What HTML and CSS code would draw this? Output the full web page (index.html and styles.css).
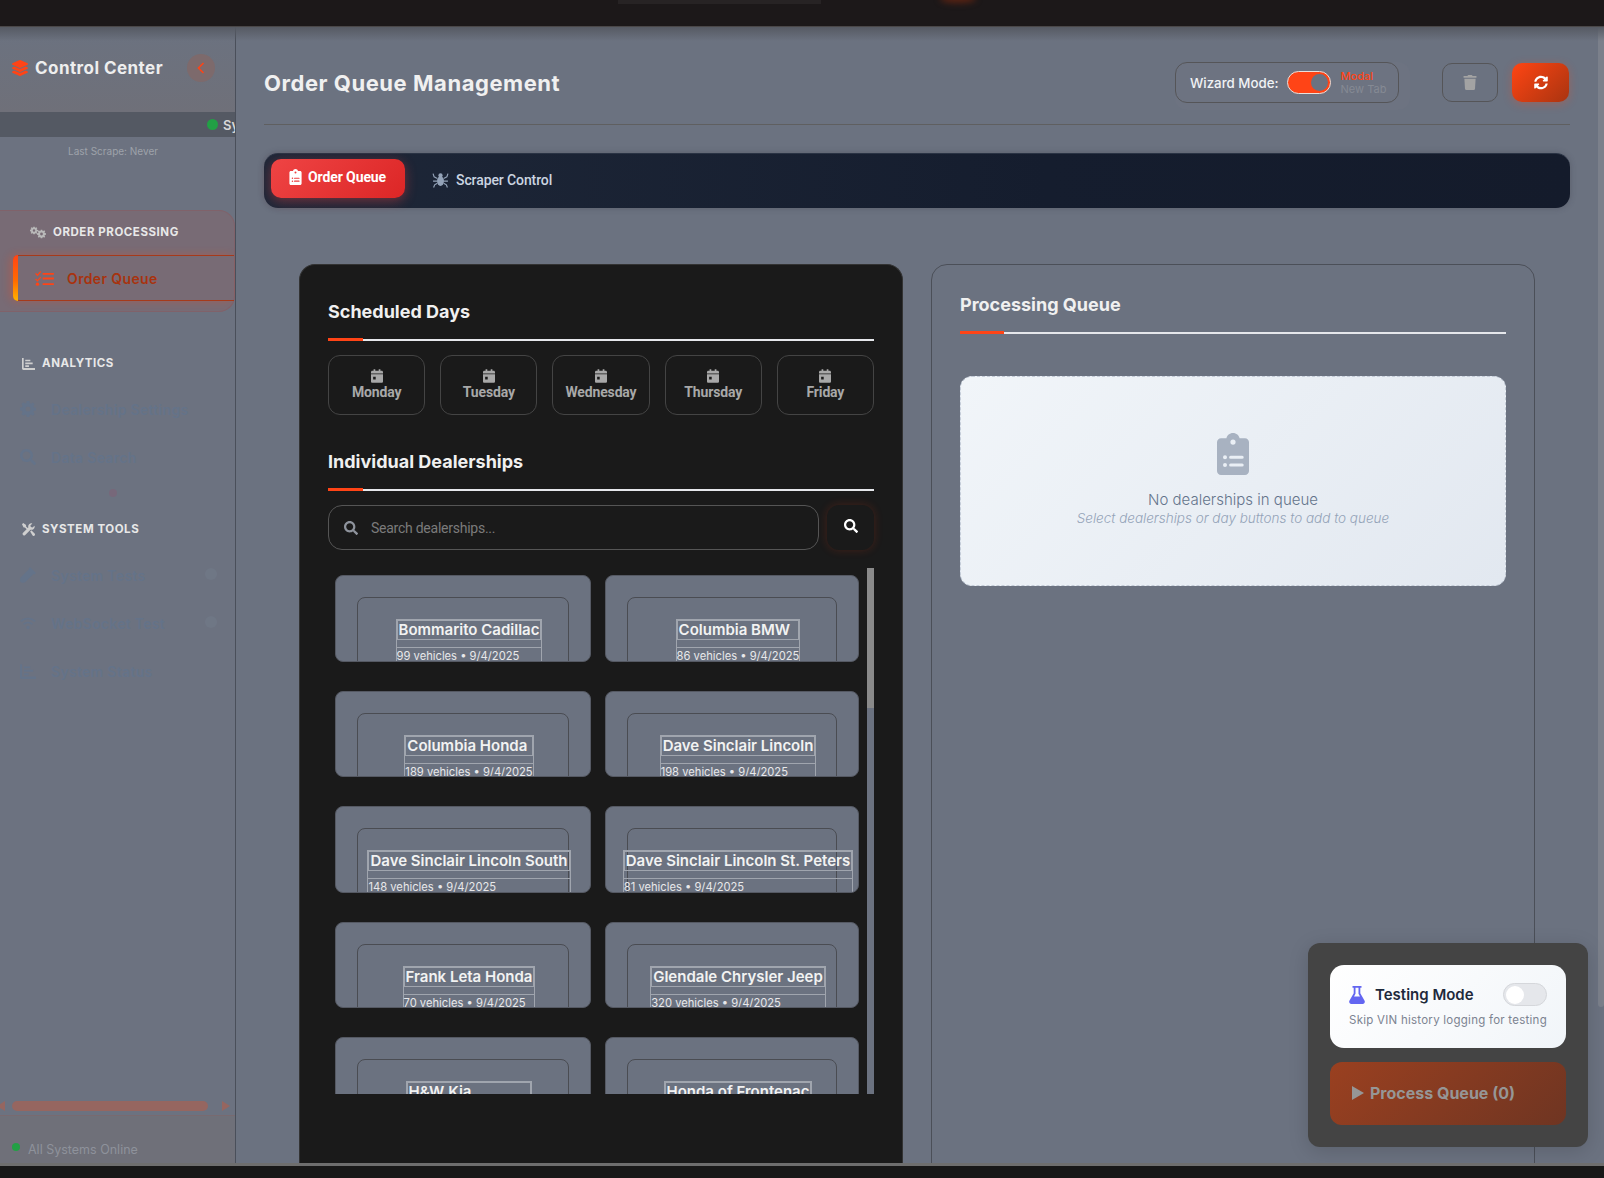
FILE: index.html
```html
<!DOCTYPE html>
<html>
<head>
    <meta charset="UTF-8">
    <title>Control Center: Order Queue Management</title>
    <link rel="stylesheet" href="styles.css">
</head>
<body>
    <!-- icon sprite -->
    <svg class="sprite" xmlns="http://www.w3.org/2000/svg">
        <symbol id="i-layers" viewBox="0 0 512 512"><path d="M12.41 148.02l232.94 105.67c6.8 3.09 14.49 3.09 21.29 0l232.94-105.67c16.55-7.51 16.55-32.52 0-40.03L266.65 2.31a25.607 25.607 0 0 0-21.29 0L12.41 107.98c-16.55 7.51-16.55 32.53 0 40.04zm487.18 88.28l-58.09-26.33-161.64 73.27c-7.56 3.43-15.59 5.17-23.86 5.17s-16.29-1.74-23.86-5.17L70.51 209.97l-58.1 26.33c-16.55 7.5-16.55 32.5 0 40l232.94 105.59c6.8 3.08 14.49 3.08 21.29 0L499.59 276.3c16.55-7.5 16.55-32.5 0-40zm0 127.8l-57.87-26.23-161.86 73.37c-7.56 3.43-15.59 5.17-23.86 5.17s-16.29-1.74-23.86-5.17L70.29 337.87 12.41 364.1c-16.55 7.5-16.55 32.5 0 40l232.94 105.59c6.8 3.08 14.49 3.08 21.29 0L499.59 404.1c16.55-7.5 16.55-32.5 0-40z"/></symbol>
        <symbol id="i-clipboard" viewBox="0 0 32 42"><path fill-rule="evenodd" d="M16 0c3.4 0 6 2.3 6.6 5.3H28c2.2 0 4 1.8 4 4V38c0 2.2-1.800 4-4 4H4c-2.200 0-4-1.800-4-4V9.300c0-2.200 1.800-4 4-4h5.400C10 2.300 12.600 0 16 0zm0 6.500a2.600 2.600 0 1 0 0 5.200 2.600 2.600 0 0 0 0-5.200zM8 22.300a2 2 0 1 0 0 4 2 2 0 0 0 0-4zm5.600.5a1.500 1.500 0 0 0 0 3h11.600a1.500 1.500 0 0 0 0-3zM8 30a2 2 0 1 0 0 4 2 2 0 0 0 0-4zm5.600.5a1.500 1.500 0 0 0 0 3h11.600a1.500 1.500 0 0 0 0-3z"/></symbol>
        <symbol id="i-calendar" viewBox="0 0 14 16"><path fill-rule="evenodd" d="M3 0h2v2h4V0h2v2h1.500C13.300 2 14 2.700 14 3.500V5H0V3.500C0 2.700 .7 2 1.500 2H3zM0 6h14v8.500c0 .8-.7 1.500-1.500 1.500h-11C.7 16 0 15.300 0 14.500zm2.500 3v3h3V9z"/></symbol>
        <symbol id="i-search" viewBox="0 0 512 512"><path d="M505 442.7L405.3 343c-4.5-4.5-10.6-7-17-7H372c27.6-35.3 44-79.7 44-128C416 93.1 322.9 0 208 0S0 93.1 0 208s93.1 208 208 208c48.3 0 92.7-16.4 128-44v16.3c0 6.4 2.5 12.5 7 17l99.7 99.7c9.4 9.4 24.6 9.4 33.9 0l28.3-28.3c9.4-9.4 9.4-24.6.1-34zM208 336c-70.7 0-128-57.2-128-128 0-70.7 57.2-128 128-128 70.7 0 128 57.2 128 128 0 70.7-57.2 128-128 128z"/></symbol>
        <symbol id="i-trash" viewBox="0 0 448 512"><path d="M432 32H312l-9.4-18.7A24 24 0 0 0 281.1 0H166.8a23.72 23.72 0 0 0-21.4 13.3L136 32H16A16 16 0 0 0 0 48v32a16 16 0 0 0 16 16h416a16 16 0 0 0 16-16V48a16 16 0 0 0-16-16zM53.2 467a48 48 0 0 0 47.9 45h245.8a48 48 0 0 0 47.9-45L416 128H32z"/></symbol>
        <symbol id="i-sync" viewBox="0 0 512 512"><path d="M370.72 133.28C339.458 104.008 298.888 87.962 255.848 88c-77.458.068-144.328 53.178-162.791 126.85-1.344 5.363-6.122 9.15-11.651 9.15H24.103c-7.498 0-13.194-6.807-11.807-14.176C33.933 94.924 134.813 8 256 8c66.448 0 126.791 26.136 171.315 68.685L463.03 40.97C478.149 25.851 504 36.559 504 57.941V192c0 13.255-10.745 24-24 24H345.941c-21.382 0-32.09-25.851-16.971-40.971l41.75-41.749zM32 296h134.059c21.382 0 32.09 25.851 16.971 40.971l-41.75 41.75c31.262 29.273 71.835 45.319 114.876 45.28 77.418-.07 144.315-53.144 162.787-126.849 1.344-5.363 6.122-9.15 11.651-9.15h57.304c7.498 0 13.194 6.807 11.807 14.176C478.067 417.076 377.187 504 256 504c-66.448 0-126.791-26.136-171.315-68.685L48.97 471.03C33.851 486.149 8 475.441 8 454.059V320c0-13.255 10.745-24 24-24z"/></symbol>
        <symbol id="i-spider" viewBox="0 0 16 16"><ellipse cx="8" cy="9.500" rx="3.300" ry="4.500"/><circle cx="8" cy="4.200" r="2"/><path d="M5 7L2 5.500 1 2.500M11 7l3-1.500 1-3M4.800 9.500H1M11.200 9.500H15M5 11.500l-2.500 1.500-1 2.500M11 11.500l2.500 1.500 1 2.500" fill="none" stroke="currentColor" stroke-width="1.100"/></symbol>
        <symbol id="i-gear" viewBox="0 0 16 16"><path fill-rule="evenodd" d="M6.700 0h2.600l.4 2.100 1.300.6 1.800-1.200 1.800 1.800-1.200 1.800.6 1.300 2 .4v2.600l-2 .4-.6 1.300 1.200 1.800-1.800 1.800-1.800-1.200-1.300.6-.4 2H6.700l-.4-2-1.300-.6-1.800 1.200-1.800-1.800 1.200-1.800-.6-1.300-2-.4V6.600l2-.4.6-1.300L1.400 3.100l1.800-1.800L5 2.500l1.300-.5zM8 5.500a2.500 2.500 0 1 0 0 5 2.500 2.500 0 0 0 0-5z"/></symbol>
        <symbol id="i-cogs" viewBox="0 0 16 12"><use href="#i-gear" x="0" y="0" width="8" height="8"/><use href="#i-gear" x="7" y="3" width="9" height="9"/></symbol>
        <symbol id="i-chart" viewBox="0 0 14 14"><path d="M0 1h1.800v10.800H14V14H1.500C.6 14 0 13.400 0 12.500zM3.500 3h5.500v1.700H3.500zM3.500 6h8v1.700h-8zM3.500 9h4v1.700h-4z"/></symbol>
        <symbol id="i-tools" viewBox="0 0 16 16"><path d="M1.500 0L5 2.500v1.700l3 3-1.400 1.400-3-3H2L0 1.500zM15.500 3.500a4 4 0 0 1-5 4.700L4 14.700a1.800 1.800 0 0 1-2.700-2.600l6.500-6.500a4 4 0 0 1 5-5L10.300 3l.6 2 2 .6zM10 10.500l1.500-1.500 4 4c.7.7.7 1.800 0 2.500s-1.800.7-2.500 0z"/></symbol>
        <symbol id="i-listcheck" viewBox="0 0 20 16"><path d="M8 2h12v2H8zM8 7h12v2H8zM8 13h12v2H8z"/><path d="M1 2l1.500 1.500L5.500 0l1 1L2.500 5.500 0 3zM1 8l1.500 1.500L5.500 6l1 1-4 4.500L0 9z"/><circle cx="2.500" cy="14" r="1.800"/></symbol>
        <symbol id="i-flask" viewBox="0 0 16 18"><path fill-rule="evenodd" d="M3.500 0h9v1.800H11.300v5.400l4.300 7.600c.7 1.400-.2 3.200-1.900 3.200H2.300c-1.700 0-2.600-1.800-1.900-3.200l4.300-7.600V1.800H3.500zM6.500 1.800v5.900L5 10.500h6L9.500 7.700V1.800z"/></symbol>
        <symbol id="i-wifi" viewBox="0 0 20 16"><path d="M1 6a13 13 0 0 1 18 0M4.500 9.500a8 8 0 0 1 11 0" fill="none" stroke="currentColor" stroke-width="2"/><circle cx="10" cy="13.500" r="2"/></symbol>
        <symbol id="i-vial" viewBox="0 0 16 16"><path d="M10 0l6 6-1.500 1.500-.8-.8L6 14.500c-1.700 1.700-4 1.700-5.200.5s-1.200-3.500.5-5.200l7.800-7.800-.6-.5z"/></symbol>
    </svg>

    <div class="top-bar"><span class="top-tab"></span><span class="top-glow"></span></div>

    <div class="app">
        <aside class="sidebar">
            <div class="side-head">
                <svg class="logo-icon"><use href="#i-layers"/></svg>
                <span class="logo-text">Control Center</span>
                <button class="collapse-btn"><svg viewBox="0 0 8 12" width="8" height="12"><path d="M6.500 1L1.500 6l5 5" fill="none" stroke="#ff4416" stroke-width="1.600"/></svg></button>
            </div>
            <div class="status-strip"><span class="dot"></span><span class="status-text">System Online</span></div>
            <div class="last-scrape">Last Scrape: Never</div>

            <div class="nav-group active-group">
                <div class="group-label"><svg class="group-icon"><use href="#i-cogs"/></svg>Order Processing</div>
                <a class="nav-item active"><svg class="nav-icon"><use href="#i-listcheck"/></svg>Order Queue</a>
            </div>

            <div class="nav-group analytics">
                <div class="group-label"><svg class="group-icon"><use href="#i-chart"/></svg>Analytics</div>
                <div class="ghost-list">
                    <a class="nav-item ghost"><svg class="nav-icon"><use href="#i-gear"/></svg>Dealership Settings</a>
                    <a class="nav-item ghost"><svg class="nav-icon"><use href="#i-search"/></svg>Data Search</a>
                </div>
            </div>
            <span class="ghost-dot"></span>

            <div class="nav-group tools">
                <div class="group-label"><svg class="group-icon"><use href="#i-tools"/></svg>System Tools</div>
                <div class="ghost-list">
                    <a class="nav-item ghost"><svg class="nav-icon"><use href="#i-vial"/></svg>System Tests<span class="ghost-badge"></span></a>
                    <a class="nav-item ghost"><svg class="nav-icon"><use href="#i-wifi"/></svg>WebSocket Test<span class="ghost-badge"></span></a>
                    <a class="nav-item ghost"><svg class="nav-icon"><use href="#i-chart"/></svg>System Status</a>
                </div>
            </div>

            <div class="side-spacer"></div>
            <div class="side-scroll">
                <span class="arrow-left"></span>
                <span class="side-thumb"></span>
                <span class="arrow-right"></span>
            </div>
            <div class="side-foot"><span class="foot-dot"></span>All Systems Online</div>
        </aside>

        <main class="main">
            <header class="page-head">
                <h1>Order Queue Management</h1>
                <div class="head-controls">
                    <div class="wizard-wrap">
                        <div class="wizard">
                            <span class="wizard-label">Wizard Mode:</span>
                            <span class="wizard-toggle"><span class="wizard-knob"></span></span>
                            <span class="wizard-opts"><span class="opt-on">Modal</span><span class="opt-off">New Tab</span></span>
                        </div>
                    </div>
                    <button class="btn-clear"><svg class="btn-icon"><use href="#i-trash"/></svg></button>
                    <button class="btn-refresh"><svg class="btn-icon"><use href="#i-sync"/></svg></button>
                </div>
            </header>

            <nav class="tabs">
                <a class="tab tab-active"><svg class="tab-icon-a"><use href="#i-clipboard"/></svg>Order Queue</a>
                <a class="tab"><svg class="tab-icon"><use href="#i-spider"/></svg>Scraper Control</a>
            </nav>

            <div class="columns">
                <section class="card-left">
                    <h2 class="section-title">Scheduled Days</h2>
                    <div class="day-row">
                        <button class="day"><svg class="day-icon"><use href="#i-calendar"/></svg>Monday</button>
                        <button class="day"><svg class="day-icon"><use href="#i-calendar"/></svg>Tuesday</button>
                        <button class="day"><svg class="day-icon"><use href="#i-calendar"/></svg>Wednesday</button>
                        <button class="day"><svg class="day-icon"><use href="#i-calendar"/></svg>Thursday</button>
                        <button class="day"><svg class="day-icon"><use href="#i-calendar"/></svg>Friday</button>
                    </div>

                    <h2 class="section-title second">Individual Dealerships</h2>
                    <div class="search-row">
                        <div class="search-box"><svg class="search-icon"><use href="#i-search"/></svg><span class="placeholder">Search dealerships...</span></div>
                        <button class="search-btn"><svg class="search-btn-icon"><use href="#i-search"/></svg></button>
                    </div>

                    <div class="dealer-area">
                        <div class="dealer-grid">
                            <div class="dealer"><div class="dealer-inner"><div class="dealer-info"><div class="dealer-name">Bommarito Cadillac</div><div class="dealer-gap"></div><div class="dealer-sub">99 vehicles • 9/4/2025</div></div></div></div>
                            <div class="dealer"><div class="dealer-inner"><div class="dealer-info"><div class="dealer-name">Columbia BMW</div><div class="dealer-gap"></div><div class="dealer-sub">86 vehicles • 9/4/2025</div></div></div></div>
                            <div class="dealer"><div class="dealer-inner"><div class="dealer-info"><div class="dealer-name">Columbia Honda</div><div class="dealer-gap"></div><div class="dealer-sub">189 vehicles • 9/4/2025</div></div></div></div>
                            <div class="dealer"><div class="dealer-inner"><div class="dealer-info"><div class="dealer-name">Dave Sinclair Lincoln</div><div class="dealer-gap"></div><div class="dealer-sub">198 vehicles • 9/4/2025</div></div></div></div>
                            <div class="dealer"><div class="dealer-inner"><div class="dealer-info"><div class="dealer-name">Dave Sinclair Lincoln South</div><div class="dealer-gap"></div><div class="dealer-sub">148 vehicles • 9/4/2025</div></div></div></div>
                            <div class="dealer"><div class="dealer-inner"><div class="dealer-info"><div class="dealer-name">Dave Sinclair Lincoln St. Peters</div><div class="dealer-gap"></div><div class="dealer-sub">81 vehicles • 9/4/2025</div></div></div></div>
                            <div class="dealer"><div class="dealer-inner"><div class="dealer-info"><div class="dealer-name">Frank Leta Honda</div><div class="dealer-gap"></div><div class="dealer-sub">70 vehicles • 9/4/2025</div></div></div></div>
                            <div class="dealer"><div class="dealer-inner"><div class="dealer-info"><div class="dealer-name">Glendale Chrysler Jeep</div><div class="dealer-gap"></div><div class="dealer-sub">320 vehicles • 9/4/2025</div></div></div></div>
                            <div class="dealer"><div class="dealer-inner"><div class="dealer-info"><div class="dealer-name">H&amp;W Kia</div><div class="dealer-gap"></div><div class="dealer-sub">112 vehicles • 9/4/2025</div></div></div></div>
                            <div class="dealer"><div class="dealer-inner"><div class="dealer-info"><div class="dealer-name">Honda of Frontenac</div><div class="dealer-gap"></div><div class="dealer-sub">95 vehicles • 9/4/2025</div></div></div></div>
                        </div>
                        <div class="list-scroll"><span class="list-thumb"></span></div>
                    </div>
                </section>

                <section class="card-right">
                    <h2 class="section-title">Processing Queue</h2>
                    <div class="empty-box">
                        <svg class="empty-icon"><use href="#i-clipboard"/></svg>
                        <div class="empty-main">No dealerships in queue</div>
                        <div class="empty-sub">Select dealerships or day buttons to add to queue</div>
                    </div>
                </section>
            </div>
        </main>
        <div class="page-scroll"><span class="page-thumb"></span></div>

        <!-- floating actions -->
        <div class="float-panel">
            <div class="testing-card">
                <div class="testing-top">
                    <svg class="flask"><use href="#i-flask"/></svg>
                    <span class="testing-title">Testing Mode</span>
                    <span class="testing-toggle"><span class="testing-knob"></span></span>
                </div>
                <div class="testing-sub">Skip VIN history logging for testing</div>
            </div>
            <button class="process-btn"><svg viewBox="0 0 12 14" width="12" height="14"><path d="M0 0l12 7-12 7z" fill="#969696"/></svg>Process Queue (0)</button>
        </div>
    </div>

    <div class="bottom-bar"></div>
</body>
</html>
```

FILE: styles.css
```css
html, body {
    margin: 0;
    height: 100%;
}

body {
    width: 1604px;
    height: 1178px;
    overflow: hidden;
    display: flex;
    flex-direction: column;
    background-color: #181818;
    font-family: Inter, "Open Sans", sans-serif;
    color: #f0f0f0;
}

.sprite {
    width: 0;
    height: 0;
    position: absolute;
}

svg {
    fill: currentColor;
    flex-shrink: 0;
}

button {
    font-family: inherit;
    padding: 0;
}

/* window edges */
.top-bar {
    height: 26px;
    flex-shrink: 0;
    background-color: #1c1819;
    border-bottom: 1px solid #4a4748;
    position: relative;
}

.top-tab {
    position: absolute;
    left: 618px;
    top: 0;
    width: 203px;
    height: 4px;
    background-color: #272324;
}

.top-glow {
    position: absolute;
    left: 940px;
    top: -6px;
    width: 36px;
    height: 9px;
    border-radius: 50%;
    background-color: #5a2313;
    filter: blur(3px);
}

.bottom-bar {
    height: 12px;
    flex-shrink: 0;
    background-color: #181818;
    border-top: 3px solid #6e6e6e;
}

.app {
    flex: 1;
    min-height: 0;
    display: flex;
    position: relative;
    background-color: #6b7280;
    overflow: hidden;
}

.app::before {
    content: "";
    position: absolute;
    left: 0;
    right: 0;
    top: 0;
    height: 14px;
    background: linear-gradient(#565a63, rgba(107, 114, 128, 0));
    z-index: 3;
    pointer-events: none;
}

/* sidebar */
.sidebar {
    width: 235px;
    flex-shrink: 0;
    border-right: 1px solid #4a4f5a;
    display: flex;
    flex-direction: column;
    overflow: hidden;
    position: relative;
    background-color: #6c7280;
}

.side-head {
    height: 85px;
    box-sizing: border-box;
    padding: 0 0 3px 12px;
    flex-shrink: 0;
    display: flex;
    align-items: center;
    background: linear-gradient(#6b7280, #6f7079);
}

.logo-icon {
    width: 16px;
    height: 16px;
    color: #ff4416;
    margin-right: 7px;
}

.logo-text {
    font-size: 17px;
    font-weight: 700;
    color: #eeeeee;
    letter-spacing: 0.45px;
    white-space: nowrap;
}

.collapse-btn {
    width: 28px;
    height: 28px;
    margin-left: 24px;
    border: none;
    border-radius: 50%;
    background-color: #7d6a6c;
    display: flex;
    align-items: center;
    justify-content: center;
}

.status-strip {
    height: 25px;
    flex-shrink: 0;
    display: flex;
    align-items: center;
    padding-left: 207px;
    background-color: #545963;
    white-space: nowrap;
}

.dot {
    width: 11px;
    height: 11px;
    flex-shrink: 0;
    border-radius: 50%;
    background-color: #22a045;
    margin-right: 5px;
}

.status-text {
    font-size: 13px;
    font-weight: 600;
    color: #d8d8d8;
}

.last-scrape {
    height: 28px;
    line-height: 28px;
    padding-right: 9px;
    text-align: center;
    font-size: 10px;
    color: #9ea2aa;
}

.nav-group {
    flex-shrink: 0;
}

.active-group {
    margin-top: 45px;
    height: 102px;
    box-sizing: border-box;
    border: 1px solid #80626a;
    border-left: none;
    border-radius: 0 16px 16px 0;
    background-color: #786b75;
}

.group-label {
    display: flex;
    align-items: center;
    height: 24px;
    font-size: 11.5px;
    font-weight: 700;
    text-transform: uppercase;
    color: #e8e8e8;
    letter-spacing: 0.55px;
}

.group-icon {
    width: 13px;
    height: 13px;
    color: #cfcfcf;
    margin-right: 7px;
}

.active-group .group-label {
    margin-top: 9px;
    padding-left: 30px;
}

.active-group .group-icon {
    width: 16px;
    height: 13px;
    color: #b9b9b9;
}

.nav-item {
    display: flex;
    align-items: center;
    font-size: 14px;
    font-weight: 600;
    white-space: nowrap;
    position: relative;
}

.nav-icon {
    width: 16px;
    height: 15px;
}

.active {
    margin: 11px 0 0 13px;
    height: 46px;
    box-sizing: border-box;
    border: 1px solid #a63a1a;
    border-right: none;
    border-radius: 6px 0 0 6px;
    padding-left: 21px;
    color: #a8330f;
    letter-spacing: 0.37px;
    box-shadow: -3px 0 9px rgba(255, 68, 22, 0.3);
}

/* accent stripe on the current item */
.active::before {
    content: "";
    position: absolute;
    left: -1px;
    top: -1px;
    bottom: -1px;
    width: 5px;
    border-radius: 6px 0 0 6px;
    background: linear-gradient(#ff4416, #ff6a00 55%, #ffb300);
}

.active .nav-icon {
    width: 19px;
    height: 15px;
    color: #ff4416;
    margin-right: 13px;
}

.analytics {
    margin-top: 39px;
}

.analytics .group-label,
.tools .group-label {
    padding-left: 22px;
}

.ghost-list {
    padding-top: 10px;
}

.ghost {
    height: 48px;
    padding-left: 20px;
    color: #647389;
    letter-spacing: 0.3px;
}

.ghost .nav-icon {
    width: 16px;
    height: 16px;
    margin-right: 15px;
}

.ghost-dot {
    width: 8px;
    height: 8px;
    border-radius: 50%;
    margin: 8px 0 0 109px;
    flex-shrink: 0;
    background-color: #77687a;
}

.tools {
    margin-top: 20px;
}

.ghost-badge {
    position: absolute;
    left: 205px;
    top: 17px;
    width: 12px;
    height: 12px;
    border-radius: 50%;
    background-color: #6f7785;
}

.side-spacer {
    flex: 1;
}

.side-scroll {
    height: 10px;
    flex-shrink: 0;
    display: flex;
    align-items: center;
    position: relative;
    margin-bottom: 4px;
}

.side-thumb {
    margin-left: 12px;
    width: 196px;
    height: 10px;
    border-radius: 5px;
    background-color: #966660;
}

.arrow-left {
    position: absolute;
    left: -3px;
    border-style: solid;
    border-width: 5px 8px 5px 0;
    border-color: transparent #966660 transparent transparent;
}

.arrow-right {
    position: absolute;
    left: 222px;
    border-style: solid;
    border-width: 5.500px 0 5.500px 8px;
    border-color: transparent transparent transparent #966660;
}

.side-foot {
    height: 48px;
    flex-shrink: 0;
    box-sizing: border-box;
    border-top: 1px solid #786a70;
    background-color: #6f7079;
    display: flex;
    align-items: center;
    padding: 19px 0 0 12px;
    font-size: 12.500px;
    color: #8e929b;
}

.foot-dot {
    width: 8px;
    height: 8px;
    border-radius: 50%;
    background-color: #22a045;
    margin: 0 8px 4px 0;
}

/* main area */
.main {
    flex: 1;
    min-width: 0;
    padding: 0 28px;
    overflow: hidden;
}

.page-scroll {
    width: 6px;
    flex-shrink: 0;
}

.page-thumb {
    display: block;
    height: 980px;
    background-color: #7b808b;
    border-radius: 0 0 3px 3px;
}

.page-head {
    display: flex;
    align-items: center;
    justify-content: space-between;
    padding: 35px 0 21px;
    border-bottom: 1px solid #5f5f60;
}

.page-head h1 {
    margin: 0;
    font-size: 22px;
    font-weight: 700;
    color: #f0f0f0;
    letter-spacing: 0.55px;
}

.head-controls {
    display: flex;
    align-items: center;
    padding-right: 1px;
}

.wizard-wrap {
    padding: 0 11px 7px 0;
    margin-bottom: -7px;
    background-color: #6d7381;
    border-radius: 12px;
    margin-right: 32px;
}

.wizard {
    width: 224px;
    height: 41px;
    box-sizing: border-box;
    border: 1px solid #555558;
    border-radius: 12px;
    display: flex;
    align-items: center;
    padding-left: 14px;
}

.wizard-label {
    font-size: 13.300px;
    font-weight: 500;
    color: #f0f2f5;
    white-space: nowrap;
}

.wizard-toggle {
    width: 44px;
    height: 23px;
    box-sizing: border-box;
    margin-left: 8px;
    border: 1px solid #e8e0dc;
    border-radius: 12px;
    background-color: #ff4416;
    display: flex;
    align-items: center;
    justify-content: flex-end;
    padding-right: 2px;
}

.wizard-knob {
    width: 17px;
    height: 17px;
    border-radius: 50%;
    background-color: #6b7280;
}

.wizard-opts {
    display: flex;
    flex-direction: column;
    margin-left: 10px;
    font-size: 11px;
    line-height: 13px;
    white-space: nowrap;
}

.opt-on {
    color: #ff4416;
    font-weight: 500;
}

.opt-off {
    color: #858a94;
}

.btn-clear,
.btn-refresh {
    width: 56px;
    height: 39px;
    border-radius: 10px;
    display: flex;
    align-items: center;
    justify-content: center;
}

.btn-clear {
    background: transparent;
    border: 1px solid #555558;
    color: #a3a3a3;
}

.btn-refresh {
    width: 57px;
    margin-left: 14px;
    border: none;
    color: #ffffff;
    background: linear-gradient(135deg, #ff4513, #a93410);
    box-shadow: 0 2px 10px rgba(255, 68, 22, 0.3);
}

.btn-icon {
    width: 14px;
    height: 15px;
}

.tabs {
    margin-top: 28px;
    height: 55px;
    box-sizing: border-box;
    padding: 5px 7px;
    display: flex;
    border-radius: 14px;
    background: linear-gradient(90deg, #1e2738, #151d2e 60%, #141b2b);
    border-top: 1px solid #2a3344;
    box-shadow: 0 0 6px rgba(50, 50, 60, 0.3);
}

.tab {
    display: flex;
    align-items: center;
    font-family: Roboto, sans-serif;
    font-size: 14px;
    letter-spacing: -0.1px;
    font-weight: 500;
    color: #cbd5e1;
    padding-left: 27px;
    padding-bottom: 3px;
}

.tab-active {
    width: 134px;
    height: 39px;
    box-sizing: border-box;
    padding: 0 0 3px 18px;
    border-radius: 10px;
    color: #ffffff;
    font-weight: 700;
    background: linear-gradient(135deg, #ef4444, #dc2626);
    box-shadow: 0 3px 12px rgba(239, 68, 68, 0.4);
}

.tab-icon-a {
    width: 13px;
    height: 16px;
    margin-right: 6px;
}

.tab-icon {
    width: 17px;
    height: 17px;
    color: #94a3b8;
    margin-right: 7px;
}

.columns {
    display: grid;
    grid-template-columns: 604px 604px;
    column-gap: 28px;
    margin-top: 56px;
    padding-left: 35px;
    height: 897px;
}

.card-left,
.card-right {
    box-sizing: border-box;
    border-radius: 16px;
    padding: 36px 28px 0;
}

.card-left {
    background-color: #1a1a1a;
    border: 1px solid #333333;
    border-bottom: none;
    height: 940px;
}

.card-right {
    padding-top: 29px;
    border: 1px solid #4b4f58;
    height: 940px;
}

.section-title {
    margin: 0;
    padding-bottom: 16px;
    font-size: 18px;
    line-height: 22px;
    font-weight: 700;
    color: #f0f0f0;
    border-bottom: 2px solid #e5e7eb;
    position: relative;
}

.section-title::after {
    content: "";
    position: absolute;
    left: 0;
    bottom: -2px;
    width: 35px;
    height: 3px;
    background-color: #ff4416;
}

.card-right .section-title::after {
    width: 44px;
}

.second {
    margin-top: 36px;
}

.day-row {
    display: grid;
    grid-template-columns: repeat(5, 1fr);
    column-gap: 15px;
    margin-top: 14px;
}

.day {
    height: 60px;
    border: 1px solid #444444;
    border-radius: 12px;
    background: transparent;
    font-family: Roboto, sans-serif;
    font-size: 14px;
    letter-spacing: -0.15px;
    font-weight: 700;
    color: #a8a8a8;
    display: flex;
    flex-direction: column;
    align-items: center;
    padding-top: 13px;
    line-height: 18px;
}

.day-icon {
    width: 12px;
    height: 14px;
    color: #a8a8a8;
}

.search-row {
    display: flex;
    margin-top: 14px;
    gap: 8px;
}

.search-box {
    flex: 1;
    height: 45px;
    box-sizing: border-box;
    border: 1px solid #555555;
    border-radius: 14px;
    display: flex;
    align-items: center;
    padding-left: 15px;
}

.search-icon {
    width: 14px;
    height: 14px;
    color: #8e939c;
    margin-right: 13px;
}

.placeholder {
    font-family: Roboto, sans-serif;
    font-size: 14px;
    letter-spacing: -0.25px;
    color: #7b7b7b;
}

.search-btn {
    width: 47px;
    height: 45px;
    border: none;
    border-radius: 12px;
    color: #ffffff;
    background-color: #1a1a1a;
    box-shadow: 0 0 10px rgba(255, 68, 22, 0.18);
    display: flex;
    align-items: center;
    justify-content: center;
    padding-bottom: 3px;
}

.search-btn-icon {
    width: 14px;
    height: 14px;
}

.dealer-area {
    margin-top: 18px;
    height: 526px;
    display: flex;
    justify-content: space-between;
    overflow: hidden;
}

.dealer-grid {
    width: 524px;
    margin: 7px 0 0 7px;
    display: grid;
    grid-template-columns: 256px 254px;
    column-gap: 14px;
    row-gap: 29px;
    align-content: start;
}

.dealer {
    height: 86.500px;
    box-sizing: border-box;
    border: 1px solid #555963;
    border-radius: 8px;
    background-color: #6b7280;
    overflow: hidden;
}

.dealer-inner {
    margin: 21px 21px 0;
    height: 90px;
    box-sizing: border-box;
    padding: 21px 0 0 12px;
    border: 1px solid #4a4c52;
    border-radius: 8px;
    display: flex;
    justify-content: center;
    align-items: flex-start;
}

.dealer-info {
    flex-shrink: 0;
    white-space: nowrap;
}

.dealer-name {
    box-sizing: border-box;
    height: 21px;
    line-height: 17px;
    font-size: 15px;
    font-weight: 600;
    color: #f2f2f2;
    padding: 0 1px;
    border: 1px solid #a0a5ae;
    border-top-width: 2px;
    border-left-width: 2px;
    border-right-width: 2px;
}

.dealer-gap {
    height: 7px;
    box-sizing: border-box;
    border: 1px solid #a0a5ae;
    border-top: none;
    border-bottom: none;
}

.dealer-sub {
    box-sizing: border-box;
    height: 24px;
    line-height: 17px;
    padding-top: 0;
    font-size: 11.200px;
    color: #e8e8ea;
    border: 1px solid #a0a5ae;
    border-bottom: none;
}

.list-scroll {
    width: 7px;
    height: 100%;
    background-color: #6b7280;
}

.list-thumb {
    display: block;
    height: 140px;
    background-color: #8a8a8a;
}

.empty-box {
    margin-top: 42px;
    height: 210px;
    box-sizing: border-box;
    border: 1px dashed #c4ccd8;
    border-radius: 12px;
    background: linear-gradient(135deg, #f1f5f9, #e2e8f0);
    display: flex;
    flex-direction: column;
    align-items: center;
    padding-top: 56px;
}

.empty-icon {
    width: 32px;
    height: 42px;
    color: #a8b2c1;
}

.empty-main {
    margin-top: 15px;
    font-size: 15px;
    line-height: 19px;
    font-weight: 300;
    color: #64748b;
}

.empty-sub {
    font-size: 13.500px;
    line-height: 19px;
    font-style: italic;
    font-weight: 300;
    color: #94a3b8;
}

/* floating panel */
.float-panel {
    position: absolute;
    right: 16px;
    bottom: 16px;
    width: 280px;
    height: 204px;
    box-sizing: border-box;
    padding: 22px;
    border-radius: 12px;
    background-color: #444444;
    box-shadow: 0 4px 20px rgba(0, 0, 0, 0.15);
    z-index: 5;
}

.testing-card {
    height: 83px;
    box-sizing: border-box;
    padding: 18px 19px 0;
    border-radius: 14px;
    background: linear-gradient(135deg, #ffffff, #f1f5f9);
}

.testing-top {
    display: flex;
    align-items: center;
    height: 23px;
}

.flask {
    width: 16px;
    height: 18px;
    color: #6366f1;
    margin-right: 10px;
}

.testing-title {
    font-size: 15px;
    font-weight: 600;
    color: #1e293b;
}

.testing-toggle {
    margin-left: auto;
    width: 44px;
    height: 23px;
    box-sizing: border-box;
    border: 1px solid #d5d7db;
    border-radius: 12px;
    background-color: #e5e7eb;
    padding: 2px;
}

.testing-knob {
    display: block;
    width: 18px;
    height: 18px;
    border-radius: 50%;
    background-color: #ffffff;
}

.testing-sub {
    margin-top: 7px;
    font-size: 11.500px;
    letter-spacing: 0.25px;
    color: #7c8391;
    white-space: nowrap;
}

.process-btn {
    margin-top: 14px;
    width: 236px;
    height: 63px;
    border: none;
    border-radius: 12px;
    background: linear-gradient(135deg, #9a4020, #6f3522);
    color: #969696;
    font-size: 16px;
    font-weight: 700;
    display: flex;
    align-items: center;
    padding: 0 0 1px 22px;
}

.process-btn svg {
    margin-right: 6px;
}
```
